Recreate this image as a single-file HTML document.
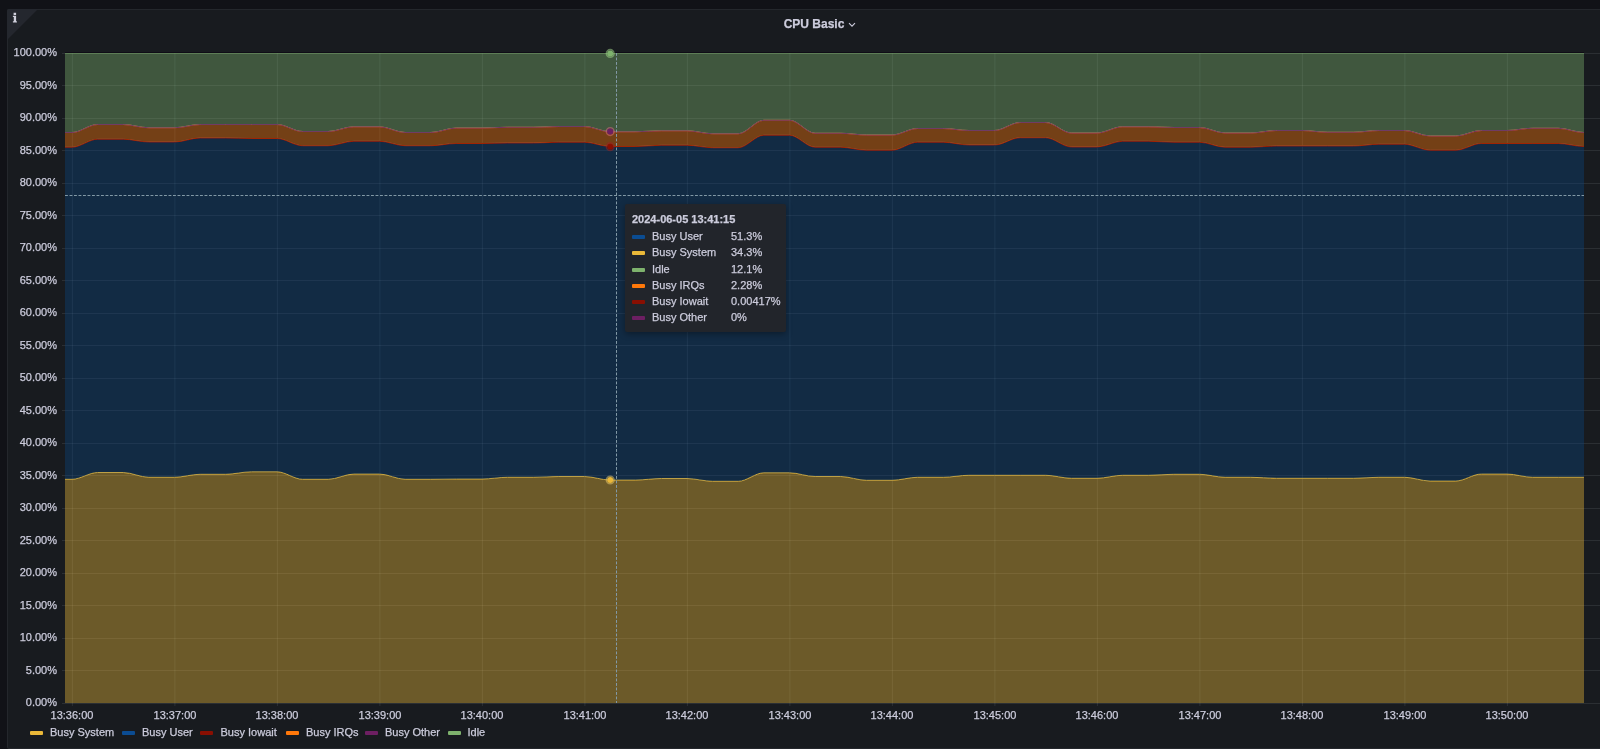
<!DOCTYPE html>
<html><head><meta charset="utf-8">
<style>
html,body{margin:0;padding:0;width:1600px;height:749px;overflow:hidden;background:#111217;font-family:"Liberation Sans",sans-serif;}
.yl,.xl,.legend,.tt,.title{-webkit-text-stroke:0.25px #ccccdc;will-change:transform;}
.panel{position:absolute;left:7px;top:9px;width:1620px;height:740px;background:#181b1f;border:1px solid rgba(204,204,220,0.07);border-radius:2px;box-sizing:border-box;}
.corner{position:absolute;left:7px;top:9px;width:0;height:0;border-top:31px solid #24272e;border-right:31px solid transparent;border-top-left-radius:2px;}
.info{position:absolute;left:12px;top:12px;width:6px;height:11px;}
.title{position:absolute;left:0;top:16px;width:1628px;text-align:center;font-size:12px;font-weight:bold;color:#ccccdc;line-height:16px;}
.chev{position:absolute;left:848px;top:22px;}
.yl{position:absolute;left:0;width:57px;text-align:right;font-size:11px;color:#ccccdc;line-height:14px;}
.xl{position:absolute;top:708px;width:60px;text-align:center;font-size:11px;color:#ccccdc;line-height:14px;}
.legend{position:absolute;left:30px;top:725px;height:14px;font-size:11px;color:#ccccdc;line-height:14px;white-space:nowrap;}
.legend .sw{position:absolute;top:6px;width:13px;height:4px;border-radius:1px;}
.legend .lt{position:absolute;top:0;}
.tt .sw{display:inline-block;width:13px;height:4px;border-radius:1px;}
.tt{position:absolute;left:625px;top:204px;width:161px;height:128px;background:#22252b;border-radius:2px;box-shadow:0 2px 6px rgba(0,0,0,0.35);color:#ccccdc;font-size:11px;}
.tt .hd{position:absolute;left:7px;top:7px;font-weight:bold;line-height:16px;}
.tt .r{position:absolute;left:7px;height:16px;line-height:16px;width:150px;}
.tt .r .sw{position:absolute;left:0;top:7px;margin:0;}
.tt .r .n{position:absolute;left:20px;top:0;}
.tt .r .v{position:absolute;left:99px;top:0;}
</style></head><body>
<div class="panel"></div>
<div class="corner"></div>
<svg class="info" viewBox="0 0 6 11" style="position:absolute;left:12px;top:12px"><path d="M1.6 0.8h2.5v2.1h-2.5z M0.9 3.7h3.2v5.5h0.8v1.3H0.9V9.2h0.9V5H0.9z" fill="#d0d0dc"/></svg>
<div class="title">CPU Basic</div>
<svg class="chev" width="8" height="6" viewBox="0 0 8 6"><path d="M1 1.2L4 4.2L7 1.2" stroke="#ccccdc" stroke-width="1.1" fill="none"/></svg>
<svg width="1600" height="749" viewBox="0 0 1600 749" style="position:absolute;left:0;top:0">
<defs><clipPath id="pc"><rect x="65" y="52.5" width="1519" height="651"/></clipPath></defs>
<path d="M62 53.5 H1600 M62 85.5 H1600 M62 118.5 H1600 M62 150.5 H1600 M62 183.5 H1600 M62 215.5 H1600 M62 248.5 H1600 M62 280.5 H1600 M62 313.5 H1600 M62 345.5 H1600 M62 378.5 H1600 M62 410.5 H1600 M62 443.5 H1600 M62 475.5 H1600 M62 508.5 H1600 M62 540.5 H1600 M62 573.5 H1600 M62 605.5 H1600 M62 638.5 H1600 M62 670.5 H1600 M62 703.5 H1600 M72.4 53 V706 M174.9 53 V706 M277.4 53 V706 M379.9 53 V706 M482.4 53 V706 M584.9 53 V706 M687.4 53 V706 M789.9 53 V706 M892.4 53 V706 M994.9 53 V706 M1097.4 53 V706 M1199.9 53 V706 M1302.4 53 V706 M1404.9 53 V706 M1507.4 53 V706" stroke="rgba(240,250,255,0.09)" stroke-width="1" fill="none"/>
<g clip-path="url(#pc)">
<path d="M46.38 479.25L72 479.25C80.54 479.25 89.08 472.5 97.62 472.5L123.25 472.5C131.79 472.5 140.33 477.25 148.88 477.25L174.5 477.25C183.04 477.25 191.58 474.25 200.12 474.25L225.75 474.25C234.29 474.25 242.83 471.75 251.38 471.75L277 471.75C285.54 471.75 294.08 479.25 302.62 479.25L328.25 479.25C336.79 479.25 345.33 474 353.88 474L379.5 474C388.04 474 396.58 479.25 405.12 479.25L430.75 479.25C439.29 479.25 447.83 479 456.38 479L482 479C490.54 479 499.08 477.25 507.62 477.25L533.25 477.25C541.79 477.25 550.33 476.5 558.88 476.5L584.5 476.5C593.04 476.5 601.58 480 610.12 480L635.75 480C644.29 480 652.83 478.5 661.38 478.5L687 478.5C695.54 478.5 704.08 481.25 712.62 481.25L738.25 481.25C746.79 481.25 755.33 472.75 763.88 472.75L789.5 472.75C798.04 472.75 806.58 476.5 815.12 476.5L840.75 476.5C849.29 476.5 857.83 480.25 866.38 480.25L892 480.25C900.54 480.25 909.08 477.25 917.62 477.25L943.25 477.25C951.79 477.25 960.33 475.25 968.88 475.25L994.5 475.25L1020.12 475.25L1045.75 475.25C1054.29 475.25 1062.83 478.25 1071.38 478.25L1097 478.25C1105.54 478.25 1114.08 475.25 1122.62 475.25L1148.25 475.25C1156.79 475.25 1165.33 474.25 1173.88 474.25L1199.5 474.25C1208.04 474.25 1216.58 477.25 1225.12 477.25L1250.75 477.25C1259.29 477.25 1267.83 478.25 1276.38 478.25L1302 478.25L1327.62 478.25L1353.25 478.25C1361.79 478.25 1370.33 477.25 1378.88 477.25L1404.5 477.25C1413.04 477.25 1421.58 481 1430.12 481L1455.75 481C1464.29 481 1472.83 474 1481.38 474L1507 474C1515.54 474 1524.08 477.25 1532.62 477.25L1558.25 477.25L1583.88 477.25L1609.5 477.25L1609.5 703L1583.88 703L1558.25 703L1532.62 703L1507 703L1481.38 703L1455.75 703L1430.12 703L1404.5 703L1378.88 703L1353.25 703L1327.62 703L1302 703L1276.38 703L1250.75 703L1225.12 703L1199.5 703L1173.88 703L1148.25 703L1122.62 703L1097 703L1071.38 703L1045.75 703L1020.12 703L994.5 703L968.88 703L943.25 703L917.62 703L892 703L866.38 703L840.75 703L815.12 703L789.5 703L763.88 703L738.25 703L712.62 703L687 703L661.38 703L635.75 703L610.12 703L584.5 703L558.88 703L533.25 703L507.62 703L482 703L456.38 703L430.75 703L405.12 703L379.5 703L353.88 703L328.25 703L302.62 703L277 703L251.38 703L225.75 703L200.12 703L174.5 703L148.88 703L123.25 703L97.62 703L72 703L46.38 703Z" fill="#EAB839" fill-opacity="0.4"/>
<path d="M46.38 479.25L72 479.25C80.54 479.25 89.08 472.5 97.62 472.5L123.25 472.5C131.79 472.5 140.33 477.25 148.88 477.25L174.5 477.25C183.04 477.25 191.58 474.25 200.12 474.25L225.75 474.25C234.29 474.25 242.83 471.75 251.38 471.75L277 471.75C285.54 471.75 294.08 479.25 302.62 479.25L328.25 479.25C336.79 479.25 345.33 474 353.88 474L379.5 474C388.04 474 396.58 479.25 405.12 479.25L430.75 479.25C439.29 479.25 447.83 479 456.38 479L482 479C490.54 479 499.08 477.25 507.62 477.25L533.25 477.25C541.79 477.25 550.33 476.5 558.88 476.5L584.5 476.5C593.04 476.5 601.58 480 610.12 480L635.75 480C644.29 480 652.83 478.5 661.38 478.5L687 478.5C695.54 478.5 704.08 481.25 712.62 481.25L738.25 481.25C746.79 481.25 755.33 472.75 763.88 472.75L789.5 472.75C798.04 472.75 806.58 476.5 815.12 476.5L840.75 476.5C849.29 476.5 857.83 480.25 866.38 480.25L892 480.25C900.54 480.25 909.08 477.25 917.62 477.25L943.25 477.25C951.79 477.25 960.33 475.25 968.88 475.25L994.5 475.25L1020.12 475.25L1045.75 475.25C1054.29 475.25 1062.83 478.25 1071.38 478.25L1097 478.25C1105.54 478.25 1114.08 475.25 1122.62 475.25L1148.25 475.25C1156.79 475.25 1165.33 474.25 1173.88 474.25L1199.5 474.25C1208.04 474.25 1216.58 477.25 1225.12 477.25L1250.75 477.25C1259.29 477.25 1267.83 478.25 1276.38 478.25L1302 478.25L1327.62 478.25L1353.25 478.25C1361.79 478.25 1370.33 477.25 1378.88 477.25L1404.5 477.25C1413.04 477.25 1421.58 481 1430.12 481L1455.75 481C1464.29 481 1472.83 474 1481.38 474L1507 474C1515.54 474 1524.08 477.25 1532.62 477.25L1558.25 477.25L1583.88 477.25L1609.5 477.25" fill="none" stroke="#EAB839" stroke-width="1"/>
<path d="M46.38 147.25L72 147.25C80.54 147.25 89.08 139.25 97.62 139.25L123.25 139.25C131.79 139.25 140.33 142 148.88 142L174.5 142C183.04 142 191.58 138 200.12 138L225.75 138C234.29 138 242.83 138.5 251.38 138.5L277 138.5C285.54 138.5 294.08 145.75 302.62 145.75L328.25 145.75C336.79 145.75 345.33 141.25 353.88 141.25L379.5 141.25C388.04 141.25 396.58 145.75 405.12 145.75L430.75 145.75C439.29 145.75 447.83 143.5 456.38 143.5L482 143.5C490.54 143.5 499.08 143 507.62 143L533.25 143C541.79 143 550.33 142.25 558.88 142.25L584.5 142.25C593.04 142.25 601.58 146.5 610.12 146.5L635.75 146.5C644.29 146.5 652.83 145.25 661.38 145.25L687 145.25C695.54 145.25 704.08 147.75 712.62 147.75L738.25 147.75C746.79 147.75 755.33 135.25 763.88 135.25L789.5 135.25C798.04 135.25 806.58 147.25 815.12 147.25L840.75 147.25C849.29 147.25 857.83 150.25 866.38 150.25L892 150.25C900.54 150.25 909.08 142.25 917.62 142.25L943.25 142.25C951.79 142.25 960.33 145 968.88 145L994.5 145C1003.04 145 1011.58 137.75 1020.12 137.75L1045.75 137.75C1054.29 137.75 1062.83 147 1071.38 147L1097 147C1105.54 147 1114.08 141.25 1122.62 141.25L1148.25 141.25C1156.79 141.25 1165.33 142.25 1173.88 142.25L1199.5 142.25C1208.04 142.25 1216.58 147.25 1225.12 147.25L1250.75 147.25C1259.29 147.25 1267.83 146 1276.38 146L1302 146L1327.62 146L1353.25 146C1361.79 146 1370.33 144.25 1378.88 144.25L1404.5 144.25C1413.04 144.25 1421.58 150.25 1430.12 150.25L1455.75 150.25C1464.29 150.25 1472.83 143.5 1481.38 143.5L1507 143.5L1532.62 143.5L1558.25 143.5C1566.79 143.5 1575.33 146.5 1583.88 146.5L1609.5 146.5L1609.5 477.25L1583.88 477.25L1558.25 477.25L1532.62 477.25C1524.08 477.25 1515.54 474 1507 474L1481.38 474C1472.83 474 1464.29 481 1455.75 481L1430.12 481C1421.58 481 1413.04 477.25 1404.5 477.25L1378.88 477.25C1370.33 477.25 1361.79 478.25 1353.25 478.25L1327.62 478.25L1302 478.25L1276.38 478.25C1267.83 478.25 1259.29 477.25 1250.75 477.25L1225.12 477.25C1216.58 477.25 1208.04 474.25 1199.5 474.25L1173.88 474.25C1165.33 474.25 1156.79 475.25 1148.25 475.25L1122.62 475.25C1114.08 475.25 1105.54 478.25 1097 478.25L1071.38 478.25C1062.83 478.25 1054.29 475.25 1045.75 475.25L1020.12 475.25L994.5 475.25L968.88 475.25C960.33 475.25 951.79 477.25 943.25 477.25L917.62 477.25C909.08 477.25 900.54 480.25 892 480.25L866.38 480.25C857.83 480.25 849.29 476.5 840.75 476.5L815.12 476.5C806.58 476.5 798.04 472.75 789.5 472.75L763.88 472.75C755.33 472.75 746.79 481.25 738.25 481.25L712.62 481.25C704.08 481.25 695.54 478.5 687 478.5L661.38 478.5C652.83 478.5 644.29 480 635.75 480L610.12 480C601.58 480 593.04 476.5 584.5 476.5L558.88 476.5C550.33 476.5 541.79 477.25 533.25 477.25L507.62 477.25C499.08 477.25 490.54 479 482 479L456.38 479C447.83 479 439.29 479.25 430.75 479.25L405.12 479.25C396.58 479.25 388.04 474 379.5 474L353.88 474C345.33 474 336.79 479.25 328.25 479.25L302.62 479.25C294.08 479.25 285.54 471.75 277 471.75L251.38 471.75C242.83 471.75 234.29 474.25 225.75 474.25L200.12 474.25C191.58 474.25 183.04 477.25 174.5 477.25L148.88 477.25C140.33 477.25 131.79 472.5 123.25 472.5L97.62 472.5C89.08 472.5 80.54 479.25 72 479.25L46.38 479.25Z" fill="#0A437C" fill-opacity="0.4"/>
<path d="M46.38 147.25L72 147.25C80.54 147.25 89.08 139.25 97.62 139.25L123.25 139.25C131.79 139.25 140.33 142 148.88 142L174.5 142C183.04 142 191.58 138 200.12 138L225.75 138C234.29 138 242.83 138.5 251.38 138.5L277 138.5C285.54 138.5 294.08 145.75 302.62 145.75L328.25 145.75C336.79 145.75 345.33 141.25 353.88 141.25L379.5 141.25C388.04 141.25 396.58 145.75 405.12 145.75L430.75 145.75C439.29 145.75 447.83 143.5 456.38 143.5L482 143.5C490.54 143.5 499.08 143 507.62 143L533.25 143C541.79 143 550.33 142.25 558.88 142.25L584.5 142.25C593.04 142.25 601.58 146.5 610.12 146.5L635.75 146.5C644.29 146.5 652.83 145.25 661.38 145.25L687 145.25C695.54 145.25 704.08 147.75 712.62 147.75L738.25 147.75C746.79 147.75 755.33 135.25 763.88 135.25L789.5 135.25C798.04 135.25 806.58 147.25 815.12 147.25L840.75 147.25C849.29 147.25 857.83 150.25 866.38 150.25L892 150.25C900.54 150.25 909.08 142.25 917.62 142.25L943.25 142.25C951.79 142.25 960.33 145 968.88 145L994.5 145C1003.04 145 1011.58 137.75 1020.12 137.75L1045.75 137.75C1054.29 137.75 1062.83 147 1071.38 147L1097 147C1105.54 147 1114.08 141.25 1122.62 141.25L1148.25 141.25C1156.79 141.25 1165.33 142.25 1173.88 142.25L1199.5 142.25C1208.04 142.25 1216.58 147.25 1225.12 147.25L1250.75 147.25C1259.29 147.25 1267.83 146 1276.38 146L1302 146L1327.62 146L1353.25 146C1361.79 146 1370.33 144.25 1378.88 144.25L1404.5 144.25C1413.04 144.25 1421.58 150.25 1430.12 150.25L1455.75 150.25C1464.29 150.25 1472.83 143.5 1481.38 143.5L1507 143.5L1532.62 143.5L1558.25 143.5C1566.79 143.5 1575.33 146.5 1583.88 146.5L1609.5 146.5" fill="none" stroke="#0A437C" stroke-width="1"/>
<path d="M46.38 147.25L72 147.25C80.54 147.25 89.08 139.25 97.62 139.25L123.25 139.25C131.79 139.25 140.33 142 148.88 142L174.5 142C183.04 142 191.58 138 200.12 138L225.75 138C234.29 138 242.83 138.5 251.38 138.5L277 138.5C285.54 138.5 294.08 145.75 302.62 145.75L328.25 145.75C336.79 145.75 345.33 141.25 353.88 141.25L379.5 141.25C388.04 141.25 396.58 145.75 405.12 145.75L430.75 145.75C439.29 145.75 447.83 143.5 456.38 143.5L482 143.5C490.54 143.5 499.08 143 507.62 143L533.25 143C541.79 143 550.33 142.25 558.88 142.25L584.5 142.25C593.04 142.25 601.58 146.5 610.12 146.5L635.75 146.5C644.29 146.5 652.83 145.25 661.38 145.25L687 145.25C695.54 145.25 704.08 147.75 712.62 147.75L738.25 147.75C746.79 147.75 755.33 135.25 763.88 135.25L789.5 135.25C798.04 135.25 806.58 147.25 815.12 147.25L840.75 147.25C849.29 147.25 857.83 150.25 866.38 150.25L892 150.25C900.54 150.25 909.08 142.25 917.62 142.25L943.25 142.25C951.79 142.25 960.33 145 968.88 145L994.5 145C1003.04 145 1011.58 137.75 1020.12 137.75L1045.75 137.75C1054.29 137.75 1062.83 147 1071.38 147L1097 147C1105.54 147 1114.08 141.25 1122.62 141.25L1148.25 141.25C1156.79 141.25 1165.33 142.25 1173.88 142.25L1199.5 142.25C1208.04 142.25 1216.58 147.25 1225.12 147.25L1250.75 147.25C1259.29 147.25 1267.83 146 1276.38 146L1302 146L1327.62 146L1353.25 146C1361.79 146 1370.33 144.25 1378.88 144.25L1404.5 144.25C1413.04 144.25 1421.58 150.25 1430.12 150.25L1455.75 150.25C1464.29 150.25 1472.83 143.5 1481.38 143.5L1507 143.5L1532.62 143.5L1558.25 143.5C1566.79 143.5 1575.33 146.5 1583.88 146.5L1609.5 146.5" fill="none" stroke="#890F02" stroke-width="1"/>
<path d="M46.38 132.5L72 132.5C80.54 132.5 89.08 124.5 97.62 124.5L123.25 124.5C131.79 124.5 140.33 127.75 148.88 127.75L174.5 127.75C183.04 127.75 191.58 124.5 200.12 124.5L225.75 124.5L251.38 124.5L277 124.5C285.54 124.5 294.08 131.5 302.62 131.5L328.25 131.5C336.79 131.5 345.33 126.75 353.88 126.75L379.5 126.75C388.04 126.75 396.58 132.5 405.12 132.5L430.75 132.5C439.29 132.5 447.83 128 456.38 128L482 128C490.54 128 499.08 127.25 507.62 127.25L533.25 127.25C541.79 127.25 550.33 126.5 558.88 126.5L584.5 126.5C593.04 126.5 601.58 131.75 610.12 131.75L635.75 131.75C644.29 131.75 652.83 130.75 661.38 130.75L687 130.75C695.54 130.75 704.08 133.75 712.62 133.75L738.25 133.75C746.79 133.75 755.33 120.25 763.88 120.25L789.5 120.25C798.04 120.25 806.58 133.25 815.12 133.25L840.75 133.25C849.29 133.25 857.83 135 866.38 135L892 135C900.54 135 909.08 128.5 917.62 128.5L943.25 128.5C951.79 128.5 960.33 130.5 968.88 130.5L994.5 130.5C1003.04 130.5 1011.58 122.5 1020.12 122.5L1045.75 122.5C1054.29 122.5 1062.83 133 1071.38 133L1097 133C1105.54 133 1114.08 126.75 1122.62 126.75L1148.25 126.75C1156.79 126.75 1165.33 127.5 1173.88 127.5L1199.5 127.5C1208.04 127.5 1216.58 133 1225.12 133L1250.75 133C1259.29 133 1267.83 130.5 1276.38 130.5L1302 130.5C1310.54 130.5 1319.08 132.25 1327.62 132.25L1353.25 132.25C1361.79 132.25 1370.33 130.5 1378.88 130.5L1404.5 130.5C1413.04 130.5 1421.58 136 1430.12 136L1455.75 136C1464.29 136 1472.83 130.5 1481.38 130.5L1507 130.5C1515.54 130.5 1524.08 128.25 1532.62 128.25L1558.25 128.25C1566.79 128.25 1575.33 132.5 1583.88 132.5L1609.5 132.5L1609.5 146.5L1583.88 146.5C1575.33 146.5 1566.79 143.5 1558.25 143.5L1532.62 143.5L1507 143.5L1481.38 143.5C1472.83 143.5 1464.29 150.25 1455.75 150.25L1430.12 150.25C1421.58 150.25 1413.04 144.25 1404.5 144.25L1378.88 144.25C1370.33 144.25 1361.79 146 1353.25 146L1327.62 146L1302 146L1276.38 146C1267.83 146 1259.29 147.25 1250.75 147.25L1225.12 147.25C1216.58 147.25 1208.04 142.25 1199.5 142.25L1173.88 142.25C1165.33 142.25 1156.79 141.25 1148.25 141.25L1122.62 141.25C1114.08 141.25 1105.54 147 1097 147L1071.38 147C1062.83 147 1054.29 137.75 1045.75 137.75L1020.12 137.75C1011.58 137.75 1003.04 145 994.5 145L968.88 145C960.33 145 951.79 142.25 943.25 142.25L917.62 142.25C909.08 142.25 900.54 150.25 892 150.25L866.38 150.25C857.83 150.25 849.29 147.25 840.75 147.25L815.12 147.25C806.58 147.25 798.04 135.25 789.5 135.25L763.88 135.25C755.33 135.25 746.79 147.75 738.25 147.75L712.62 147.75C704.08 147.75 695.54 145.25 687 145.25L661.38 145.25C652.83 145.25 644.29 146.5 635.75 146.5L610.12 146.5C601.58 146.5 593.04 142.25 584.5 142.25L558.88 142.25C550.33 142.25 541.79 143 533.25 143L507.62 143C499.08 143 490.54 143.5 482 143.5L456.38 143.5C447.83 143.5 439.29 145.75 430.75 145.75L405.12 145.75C396.58 145.75 388.04 141.25 379.5 141.25L353.88 141.25C345.33 141.25 336.79 145.75 328.25 145.75L302.62 145.75C294.08 145.75 285.54 138.5 277 138.5L251.38 138.5C242.83 138.5 234.29 138 225.75 138L200.12 138C191.58 138 183.04 142 174.5 142L148.88 142C140.33 142 131.79 139.25 123.25 139.25L97.62 139.25C89.08 139.25 80.54 147.25 72 147.25L46.38 147.25Z" fill="#FF780A" fill-opacity="0.4"/>
<path d="M46.38 132.5L72 132.5C80.54 132.5 89.08 124.5 97.62 124.5L123.25 124.5C131.79 124.5 140.33 127.75 148.88 127.75L174.5 127.75C183.04 127.75 191.58 124.5 200.12 124.5L225.75 124.5L251.38 124.5L277 124.5C285.54 124.5 294.08 131.5 302.62 131.5L328.25 131.5C336.79 131.5 345.33 126.75 353.88 126.75L379.5 126.75C388.04 126.75 396.58 132.5 405.12 132.5L430.75 132.5C439.29 132.5 447.83 128 456.38 128L482 128C490.54 128 499.08 127.25 507.62 127.25L533.25 127.25C541.79 127.25 550.33 126.5 558.88 126.5L584.5 126.5C593.04 126.5 601.58 131.75 610.12 131.75L635.75 131.75C644.29 131.75 652.83 130.75 661.38 130.75L687 130.75C695.54 130.75 704.08 133.75 712.62 133.75L738.25 133.75C746.79 133.75 755.33 120.25 763.88 120.25L789.5 120.25C798.04 120.25 806.58 133.25 815.12 133.25L840.75 133.25C849.29 133.25 857.83 135 866.38 135L892 135C900.54 135 909.08 128.5 917.62 128.5L943.25 128.5C951.79 128.5 960.33 130.5 968.88 130.5L994.5 130.5C1003.04 130.5 1011.58 122.5 1020.12 122.5L1045.75 122.5C1054.29 122.5 1062.83 133 1071.38 133L1097 133C1105.54 133 1114.08 126.75 1122.62 126.75L1148.25 126.75C1156.79 126.75 1165.33 127.5 1173.88 127.5L1199.5 127.5C1208.04 127.5 1216.58 133 1225.12 133L1250.75 133C1259.29 133 1267.83 130.5 1276.38 130.5L1302 130.5C1310.54 130.5 1319.08 132.25 1327.62 132.25L1353.25 132.25C1361.79 132.25 1370.33 130.5 1378.88 130.5L1404.5 130.5C1413.04 130.5 1421.58 136 1430.12 136L1455.75 136C1464.29 136 1472.83 130.5 1481.38 130.5L1507 130.5C1515.54 130.5 1524.08 128.25 1532.62 128.25L1558.25 128.25C1566.79 128.25 1575.33 132.5 1583.88 132.5L1609.5 132.5" fill="none" stroke="#FF780A" stroke-width="1"/>
<path d="M46.38 132.5L72 132.5C80.54 132.5 89.08 124.5 97.62 124.5L123.25 124.5C131.79 124.5 140.33 127.75 148.88 127.75L174.5 127.75C183.04 127.75 191.58 124.5 200.12 124.5L225.75 124.5L251.38 124.5L277 124.5C285.54 124.5 294.08 131.5 302.62 131.5L328.25 131.5C336.79 131.5 345.33 126.75 353.88 126.75L379.5 126.75C388.04 126.75 396.58 132.5 405.12 132.5L430.75 132.5C439.29 132.5 447.83 128 456.38 128L482 128C490.54 128 499.08 127.25 507.62 127.25L533.25 127.25C541.79 127.25 550.33 126.5 558.88 126.5L584.5 126.5C593.04 126.5 601.58 131.75 610.12 131.75L635.75 131.75C644.29 131.75 652.83 130.75 661.38 130.75L687 130.75C695.54 130.75 704.08 133.75 712.62 133.75L738.25 133.75C746.79 133.75 755.33 120.25 763.88 120.25L789.5 120.25C798.04 120.25 806.58 133.25 815.12 133.25L840.75 133.25C849.29 133.25 857.83 135 866.38 135L892 135C900.54 135 909.08 128.5 917.62 128.5L943.25 128.5C951.79 128.5 960.33 130.5 968.88 130.5L994.5 130.5C1003.04 130.5 1011.58 122.5 1020.12 122.5L1045.75 122.5C1054.29 122.5 1062.83 133 1071.38 133L1097 133C1105.54 133 1114.08 126.75 1122.62 126.75L1148.25 126.75C1156.79 126.75 1165.33 127.5 1173.88 127.5L1199.5 127.5C1208.04 127.5 1216.58 133 1225.12 133L1250.75 133C1259.29 133 1267.83 130.5 1276.38 130.5L1302 130.5C1310.54 130.5 1319.08 132.25 1327.62 132.25L1353.25 132.25C1361.79 132.25 1370.33 130.5 1378.88 130.5L1404.5 130.5C1413.04 130.5 1421.58 136 1430.12 136L1455.75 136C1464.29 136 1472.83 130.5 1481.38 130.5L1507 130.5C1515.54 130.5 1524.08 128.25 1532.62 128.25L1558.25 128.25C1566.79 128.25 1575.33 132.5 1583.88 132.5L1609.5 132.5" fill="none" stroke="#6D1F62" stroke-width="1"/>
<path d="M46.38 53L72 53L97.62 53L123.25 53L148.88 53L174.5 53L200.12 53L225.75 53L251.38 53L277 53L302.62 53L328.25 53L353.88 53L379.5 53L405.12 53L430.75 53L456.38 53L482 53L507.62 53L533.25 53L558.88 53L584.5 53L610.12 53L635.75 53L661.38 53L687 53L712.62 53L738.25 53L763.88 53L789.5 53L815.12 53L840.75 53L866.38 53L892 53L917.62 53L943.25 53L968.88 53L994.5 53L1020.12 53L1045.75 53L1071.38 53L1097 53L1122.62 53L1148.25 53L1173.88 53L1199.5 53L1225.12 53L1250.75 53L1276.38 53L1302 53L1327.62 53L1353.25 53L1378.88 53L1404.5 53L1430.12 53L1455.75 53L1481.38 53L1507 53L1532.62 53L1558.25 53L1583.88 53L1609.5 53L1609.5 132.5L1583.88 132.5C1575.33 132.5 1566.79 128.25 1558.25 128.25L1532.62 128.25C1524.08 128.25 1515.54 130.5 1507 130.5L1481.38 130.5C1472.83 130.5 1464.29 136 1455.75 136L1430.12 136C1421.58 136 1413.04 130.5 1404.5 130.5L1378.88 130.5C1370.33 130.5 1361.79 132.25 1353.25 132.25L1327.62 132.25C1319.08 132.25 1310.54 130.5 1302 130.5L1276.38 130.5C1267.83 130.5 1259.29 133 1250.75 133L1225.12 133C1216.58 133 1208.04 127.5 1199.5 127.5L1173.88 127.5C1165.33 127.5 1156.79 126.75 1148.25 126.75L1122.62 126.75C1114.08 126.75 1105.54 133 1097 133L1071.38 133C1062.83 133 1054.29 122.5 1045.75 122.5L1020.12 122.5C1011.58 122.5 1003.04 130.5 994.5 130.5L968.88 130.5C960.33 130.5 951.79 128.5 943.25 128.5L917.62 128.5C909.08 128.5 900.54 135 892 135L866.38 135C857.83 135 849.29 133.25 840.75 133.25L815.12 133.25C806.58 133.25 798.04 120.25 789.5 120.25L763.88 120.25C755.33 120.25 746.79 133.75 738.25 133.75L712.62 133.75C704.08 133.75 695.54 130.75 687 130.75L661.38 130.75C652.83 130.75 644.29 131.75 635.75 131.75L610.12 131.75C601.58 131.75 593.04 126.5 584.5 126.5L558.88 126.5C550.33 126.5 541.79 127.25 533.25 127.25L507.62 127.25C499.08 127.25 490.54 128 482 128L456.38 128C447.83 128 439.29 132.5 430.75 132.5L405.12 132.5C396.58 132.5 388.04 126.75 379.5 126.75L353.88 126.75C345.33 126.75 336.79 131.5 328.25 131.5L302.62 131.5C294.08 131.5 285.54 124.5 277 124.5L251.38 124.5L225.75 124.5L200.12 124.5C191.58 124.5 183.04 127.75 174.5 127.75L148.88 127.75C140.33 127.75 131.79 124.5 123.25 124.5L97.62 124.5C89.08 124.5 80.54 132.5 72 132.5L46.38 132.5Z" fill="#7EB26D" fill-opacity="0.4"/>
<path d="M65 53.5 H1584" fill="none" stroke="#7EB26D" stroke-opacity="0.35" stroke-width="1"/>
</g>
<path d="M65 52.5H1584" stroke="#0f0c16" stroke-width="1"/>
<path d="M616.5 53V703" stroke="#8299a6" stroke-width="1" stroke-dasharray="2.9 1.6" fill="none"/>
<path d="M65 195.5H1584" stroke="#8299a6" stroke-width="1" stroke-dasharray="2.9 1.6" fill="none"/>
<circle cx="610.2" cy="53.4" r="3.8" fill="none" stroke="#a8e090" stroke-opacity="0.5" stroke-width="1.6"/><circle cx="610.2" cy="53.4" r="3" fill="#7EB26D"/>
<circle cx="610.2" cy="131.6" r="3.8" fill="none" stroke="#e07080" stroke-opacity="0.5" stroke-width="1.6"/><circle cx="610.2" cy="131.6" r="3" fill="#6D1F62"/>
<circle cx="610.2" cy="146.7" r="3.8" fill="none" stroke="#a02020" stroke-opacity="0.5" stroke-width="1.6"/><circle cx="610.2" cy="146.7" r="3" fill="#890F02"/>
<circle cx="610.2" cy="480" r="3.8" fill="none" stroke="#f0d070" stroke-opacity="0.5" stroke-width="1.6"/><circle cx="610.2" cy="480" r="3" fill="#EAB839"/>
</svg>
<div class="yl" style="top:45px">100.00%</div>
<div class="yl" style="top:77.5px">95.00%</div>
<div class="yl" style="top:110px">90.00%</div>
<div class="yl" style="top:142.5px">85.00%</div>
<div class="yl" style="top:175px">80.00%</div>
<div class="yl" style="top:207.5px">75.00%</div>
<div class="yl" style="top:240px">70.00%</div>
<div class="yl" style="top:272.5px">65.00%</div>
<div class="yl" style="top:305px">60.00%</div>
<div class="yl" style="top:337.5px">55.00%</div>
<div class="yl" style="top:370px">50.00%</div>
<div class="yl" style="top:402.5px">45.00%</div>
<div class="yl" style="top:435px">40.00%</div>
<div class="yl" style="top:467.5px">35.00%</div>
<div class="yl" style="top:500px">30.00%</div>
<div class="yl" style="top:532.5px">25.00%</div>
<div class="yl" style="top:565px">20.00%</div>
<div class="yl" style="top:597.5px">15.00%</div>
<div class="yl" style="top:630px">10.00%</div>
<div class="yl" style="top:662.5px">5.00%</div>
<div class="yl" style="top:695px">0.00%</div>
<div class="xl" style="left:42px">13:36:00</div>
<div class="xl" style="left:144.5px">13:37:00</div>
<div class="xl" style="left:247px">13:38:00</div>
<div class="xl" style="left:349.5px">13:39:00</div>
<div class="xl" style="left:452px">13:40:00</div>
<div class="xl" style="left:554.5px">13:41:00</div>
<div class="xl" style="left:657px">13:42:00</div>
<div class="xl" style="left:759.5px">13:43:00</div>
<div class="xl" style="left:862px">13:44:00</div>
<div class="xl" style="left:964.5px">13:45:00</div>
<div class="xl" style="left:1067px">13:46:00</div>
<div class="xl" style="left:1169.5px">13:47:00</div>
<div class="xl" style="left:1272px">13:48:00</div>
<div class="xl" style="left:1374.5px">13:49:00</div>
<div class="xl" style="left:1477px">13:50:00</div>
<div class="legend">
<span class="sw" style="left:0px;background:#EAB839"></span><span class="lt" style="left:20px">Busy System</span>
<span class="sw" style="left:92px;background:#0B4C92"></span><span class="lt" style="left:112px">Busy User</span>
<span class="sw" style="left:170px;background:#890F02"></span><span class="lt" style="left:190.5px">Busy Iowait</span>
<span class="sw" style="left:256px;background:#FF780A"></span><span class="lt" style="left:276px">Busy IRQs</span>
<span class="sw" style="left:335px;background:#6D1F62"></span><span class="lt" style="left:355px">Busy Other</span>
<span class="sw" style="left:418px;background:#7EB26D"></span><span class="lt" style="left:437.5px">Idle</span>
</div>
<div class="tt">
<div class="hd">2024-06-05 13:41:15</div>
<div class="r" style="top:24px"><span class="sw" style="background:#0B4C92"></span><span class="n">Busy User</span><span class="v">51.3%</span></div>
<div class="r" style="top:40.25px"><span class="sw" style="background:#EAB839"></span><span class="n">Busy System</span><span class="v">34.3%</span></div>
<div class="r" style="top:56.5px"><span class="sw" style="background:#7EB26D"></span><span class="n">Idle</span><span class="v">12.1%</span></div>
<div class="r" style="top:72.75px"><span class="sw" style="background:#FF780A"></span><span class="n">Busy IRQs</span><span class="v">2.28%</span></div>
<div class="r" style="top:89px"><span class="sw" style="background:#890F02"></span><span class="n">Busy Iowait</span><span class="v">0.00417%</span></div>
<div class="r" style="top:105.25px"><span class="sw" style="background:#6D1F62"></span><span class="n">Busy Other</span><span class="v">0%</span></div>
</div>
</body></html>
